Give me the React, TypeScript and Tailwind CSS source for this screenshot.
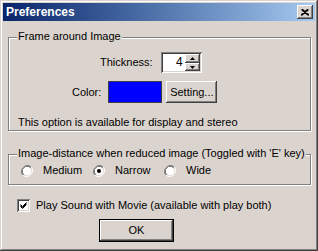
const font = "font-['Liberation_Sans',Arial,sans-serif]";

const raised =
  "shadow-[inset_-1px_-1px_#404040,inset_1px_1px_#ffffff,inset_-2px_-2px_#808080,inset_2px_2px_#dbd4ce]";
const sunken =
  "shadow-[inset_1px_1px_#808080,inset_-1px_-1px_#ffffff,inset_2px_2px_#404040,inset_-2px_-2px_#dbd4ce]";

/** 分组框：蚀刻边框 + 覆盖在边线上的标题 */
function GroupBox({
  title,
  className,
  children,
}: {
  title: string;
  className: string;
  children: React.ReactNode;
}) {
  return (
    <div
      className={`relative ml-[5px] w-[303px] border border-[#808080] shadow-[inset_1px_1px_#fff,1px_1px_#fff] ${className}`}
    >
      <span className="absolute left-[8px] top-[-8px] bg-[#dbd4ce] px-[1px] leading-[13px]">
        {title}
      </span>
      {children}
    </div>
  );
}

function Radio({ checked, label, className }: { checked?: boolean; label: string; className: string }) {
  return (
    <div className={`flex items-center ${className}`}>
      <svg width="12" height="12" viewBox="0 0 12 12" className="shrink-0">
        <path d="M10.2 1.8 A6 6 0 0 0 1.8 10.2" fill="none" stroke="#808080" strokeWidth="1" />
        <path d="M9.5 2.5 A5 5 0 0 0 2.5 9.5" fill="none" stroke="#404040" strokeWidth="1" />
        <path d="M1.8 10.2 A6 6 0 0 0 10.2 1.8" fill="none" stroke="#ffffff" strokeWidth="1" />
        <circle cx="6" cy="6" r="4.3" fill="#ffffff" />
        {checked && <circle cx="6" cy="6" r="2" fill="#000000" />}
      </svg>
      <span className="ml-[10px] leading-[13px]">{label}</span>
    </div>
  );
}

export default function App() {
  return (
    <div
      className={`${font} text-[11px] text-black bg-[#dbd4ce] w-[318px] h-[251px] p-[3px] shadow-[inset_-1px_-1px_#404040,inset_1px_1px_#dbd4ce,inset_-2px_-2px_#808080,inset_2px_2px_#ffffff] overflow-hidden`}
    >
      {/* 标题栏 */}
      <div className="h-[18px] flex items-center bg-gradient-to-r from-[#0a246a] to-[#a6caf0] pl-[3px] pr-[2px]">
        <span className="text-white font-bold text-[12px] leading-[14px]">Preferences</span>
        <div
          className={`ml-auto w-[16px] h-[14px] flex items-center justify-center bg-[#dbd4ce] ${raised}`}
        >
          <svg width="8" height="7" viewBox="0 0 8 7">
            <path d="M0.5 0.5 L7.5 6.5 M1.5 0.5 L8 6 M7.5 0.5 L0.5 6.5 M6.5 0.5 L0 6" stroke="#000" strokeWidth="1.1" />
          </svg>
        </div>
      </div>

      {/* 边框设置 */}
      <GroupBox title="Frame around Image" className="mt-[16px] h-[94px]">
        <div className="flex items-center mt-[14px]">
          <span className="ml-[91px] leading-[13px]">Thickness:</span>
          <div className={`ml-[8px] w-[41px] h-[21px] bg-white flex items-center p-[2px] ${sunken}`}>
            <span className="flex-1 text-right pr-[2px] text-[12px] leading-[13px]">4</span>
            <div className="flex flex-col w-[15px] h-[17px]">
              <div className={`h-[9px] bg-[#dbd4ce] flex items-center justify-center ${raised}`}>
                <svg width="5" height="3" viewBox="0 0 5 3">
                  <path d="M2.5 0 L5 3 L0 3 Z" fill="#000" />
                </svg>
              </div>
              <div className={`h-[8px] bg-[#dbd4ce] flex items-center justify-center ${raised}`}>
                <svg width="5" height="3" viewBox="0 0 5 3">
                  <path d="M0 0 L5 0 L2.5 3 Z" fill="#000" />
                </svg>
              </div>
            </div>
          </div>
        </div>

        <div className="flex items-center mt-[8px]">
          <span className="ml-[63px] leading-[13px]">Color:</span>
          <div className="ml-[7px] w-[54px] h-[22px] bg-[#0000ff] border border-[#404040]" />
          <div
            className={`ml-[4px] w-[51px] h-[22px] flex items-center justify-center bg-[#dbd4ce] ${raised}`}
          >
            Setting...
          </div>
        </div>

        <p className="ml-[9px] mt-[13px] leading-[13px]">
          This option is available for display and stereo
        </p>
      </GroupBox>

      {/* 图像间距 */}
      <GroupBox
        title="Image-distance when reduced image (Toggled with 'E' key)"
        className="mt-[23px] h-[31px]"
      >
        <div className="flex items-center mt-[9px] ml-[12px]">
          <Radio label="Medium" className="w-[72px]" />
          <Radio label="Narrow" checked className="w-[71px]" />
          <Radio label="Wide" className="w-[60px]" />
        </div>
      </GroupBox>

      {/* 播放声音 */}
      <div className="flex items-center mt-[14px] ml-[14px]">
        <div className={`w-[13px] h-[13px] bg-white flex items-center justify-center ${sunken}`}>
          <svg width="7" height="7" viewBox="0 0 7 7">
            <path d="M0.5 2.5 L2.5 4.5 L6.5 0.5 M0.5 3.5 L2.5 5.5 L6.5 1.5 M0.5 4.5 L2.5 6.5 L6.5 2.5" fill="none" stroke="#000" strokeWidth="1" />
          </svg>
        </div>
        <span className="ml-[6px] leading-[13px]">Play Sound with Movie (available with play both)</span>
      </div>

      {/* 确定按钮 */}
      <div
        className={`mt-[7px] ml-[96px] w-[75px] h-[23px] flex items-center justify-center bg-[#dbd4ce] border border-black ${raised}`}
      >
        OK
      </div>
    </div>
  );
}
